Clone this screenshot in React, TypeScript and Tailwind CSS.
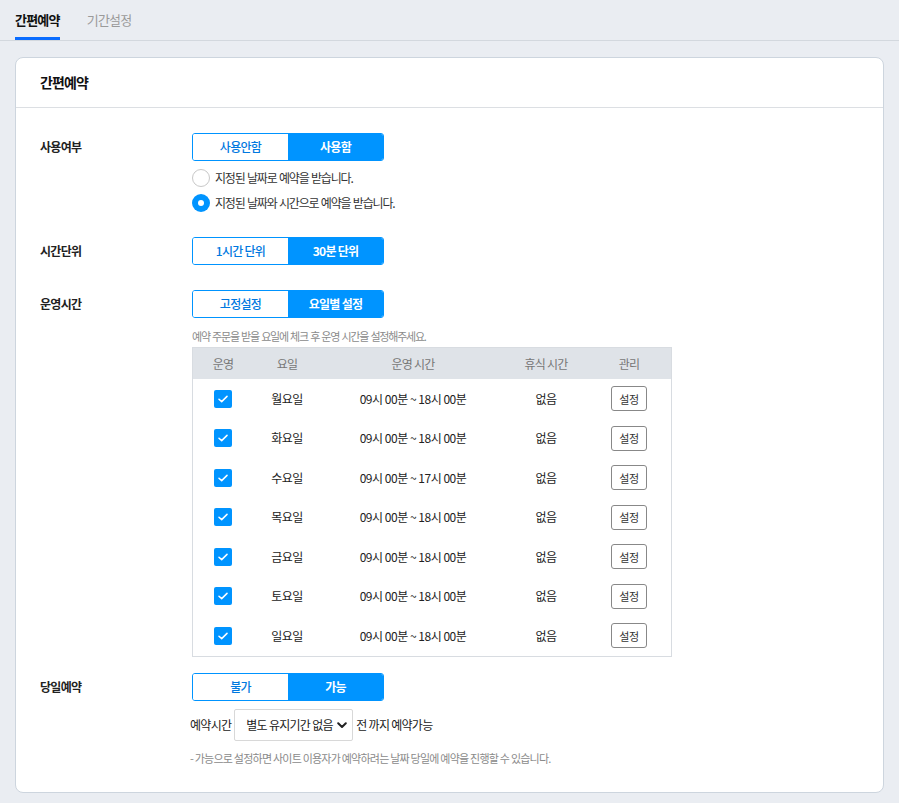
import React, { useState } from "react";

const FONT = {
  fontFamily: '"Noto Sans CJK KR", "Noto Sans", "Liberation Sans", sans-serif',
};

type Day = { name: string; time: string; rest: string; on: boolean };

const DAYS: Day[] = [
  { name: "월요일", time: "09시 00분 ~ 18시 00분", rest: "없음", on: true },
  { name: "화요일", time: "09시 00분 ~ 18시 00분", rest: "없음", on: true },
  { name: "수요일", time: "09시 00분 ~ 17시 00분", rest: "없음", on: true },
  { name: "목요일", time: "09시 00분 ~ 18시 00분", rest: "없음", on: true },
  { name: "금요일", time: "09시 00분 ~ 18시 00분", rest: "없음", on: true },
  { name: "토요일", time: "09시 00분 ~ 18시 00분", rest: "없음", on: true },
  { name: "일요일", time: "09시 00분 ~ 18시 00분", rest: "없음", on: true },
];

function Segment({
  options,
  value,
  onChange,
}: {
  options: string[];
  value: number;
  onChange: (i: number) => void;
}) {
  return (
    <div className="flex w-[192px] h-[28px] border border-[#0094ff] rounded-[3px] overflow-hidden">
      {options.map((opt, i) => (
        <button
          key={opt}
          onClick={() => onChange(i)}
          className={
            value === i
              ? "flex-1 bg-[#0094ff] text-white text-[12px] font-bold tracking-[-0.06em]"
              : "flex-1 bg-white text-[#0078e0] text-[12px] font-medium tracking-[-0.06em]"
          }
        >
          {opt}
        </button>
      ))}
    </div>
  );
}

function Radio({
  checked,
  label,
  onClick,
}: {
  checked: boolean;
  label: string;
  onClick: () => void;
}) {
  return (
    <label className="flex items-center gap-[5px] cursor-pointer" onClick={onClick}>
      {checked ? (
        <span className="w-[18px] h-[18px] rounded-full bg-[#0094ff] flex items-center justify-center">
          <span className="w-[6px] h-[6px] rounded-full bg-white" />
        </span>
      ) : (
        <span className="w-[18px] h-[18px] rounded-full border border-[#c8c8c8] bg-white" />
      )}
      <span className="text-[12px] text-[#333] tracking-[-0.1em] [word-spacing:1px]">{label}</span>
    </label>
  );
}

function Check({ checked }: { checked: boolean }) {
  return (
    <span
      className={
        checked
          ? "w-[18px] h-[18px] rounded-[2px] bg-[#0094ff] flex items-center justify-center"
          : "w-[18px] h-[18px] rounded-[2px] border border-[#c8c8c8] bg-white"
      }
    >
      {checked && (
        <svg width="10" height="8" viewBox="0 0 10 8" fill="none">
          <path d="M1 4.2L3.7 6.6L9 1.4" stroke="white" strokeWidth="1.5" strokeLinecap="round" strokeLinejoin="round" />
        </svg>
      )}
    </span>
  );
}

function Row({ label, children }: { label: string; children: React.ReactNode }) {
  return (
    <div className="flex">
      <div className="w-[152px] h-[28px] flex items-center text-[12px] font-bold text-[#222] tracking-[-0.06em]">
        {label}
      </div>
      <div className="flex-1">{children}</div>
    </div>
  );
}

export default function App() {
  const [tab, setTab] = useState(0);
  const [use, setUse] = useState(1);
  const [mode, setMode] = useState(1);
  const [unit, setUnit] = useState(1);
  const [hours, setHours] = useState(1);
  const [sameDay, setSameDay] = useState(1);

  return (
    <div className="min-h-[803px] bg-[#eaedf2] pb-[11px]" style={FONT}>
      {/* Tabs */}
      <div className="flex h-[41px] border-b border-[#d3d8de] px-[15px] gap-[27px]">
        {["간편예약", "기간설정"].map((t, i) => (
          <button
            key={t}
            onClick={() => setTab(i)}
            className={
              tab === i
                ? "h-full text-[13px] font-bold text-[#111] tracking-[-0.06em] border-b-[3px] border-[#0a6cff] pt-[3px]"
                : "h-full text-[13px] text-[#9a9a9a] tracking-[-0.06em] border-b-[3px] border-transparent pt-[3px]"
            }
          >
            {t}
          </button>
        ))}
      </div>

      {/* Card */}
      <div className="mx-[15px] mt-[16px] bg-white border border-[#cdd5de] rounded-[8px]">
        <div className="h-[50px] flex items-center px-[24px] border-b border-[#dcdfe3]">
          <h2 className="text-[14px] font-bold text-[#111] tracking-[-0.06em]">간편예약</h2>
        </div>

        <div className="pl-[24px] pr-[24px] pt-[25px] pb-[26px]">
          <Row label="사용여부">
            <Segment options={["사용안함", "사용함"]} value={use} onChange={setUse} />
            <div className="mt-[8px] flex flex-col gap-[7px]">
              <Radio
                checked={mode === 0}
                label="지정된 날짜로 예약을 받습니다."
                onClick={() => setMode(0)}
              />
              <Radio
                checked={mode === 1}
                label="지정된 날짜와 시간으로 예약을 받습니다."
                onClick={() => setMode(1)}
              />
            </div>
          </Row>

          <div className="mt-[25px]">
            <Row label="시간단위">
              <Segment options={["1시간 단위", "30분 단위"]} value={unit} onChange={setUnit} />
            </Row>
          </div>

          <div className="mt-[25px]">
            <Row label="운영시간">
              <Segment options={["고정설정", "요일별 설정"]} value={hours} onChange={setHours} />
              <p className="mt-[10px] text-[11px] text-[#8a8a8a] leading-[16px] tracking-[-0.11em] [word-spacing:1px]">
                예약 주문을 받을 요일에 체크 후 운영 시간을 설정해주세요.
              </p>
              <div className="mt-[3px] w-[480px] border border-[#d8dce1]">
                <div className="flex h-[31px] items-center bg-[#dfe3e8] text-[12px] text-[#777] tracking-[-0.06em]">
                  <div className="w-[60px] text-center">운영</div>
                  <div className="w-[68px] text-center">요일</div>
                  <div className="w-[184px] text-center">운영 시간</div>
                  <div className="w-[82px] text-center">휴식 시간</div>
                  <div className="flex-1 text-center">관리</div>
                </div>
                {DAYS.map((d) => (
                  <div
                    key={d.name}
                    className="flex h-[39.5px] items-center text-[12px] text-[#222] tracking-[-0.04em]"
                  >
                    <div className="w-[60px] flex justify-center">
                      <Check checked={d.on} />
                    </div>
                    <div className="w-[68px] text-center">{d.name}</div>
                    <div className="w-[184px] text-center">{d.time}</div>
                    <div className="w-[82px] text-center">{d.rest}</div>
                    <div className="flex-1 flex justify-center">
                      <button className="w-[36px] h-[25px] border border-[#888] rounded-[3px] text-[11px] text-[#333] bg-white">
                        설정
                      </button>
                    </div>
                  </div>
                ))}
              </div>
            </Row>
          </div>

          <div className="mt-[16px]">
            <Row label="당일예약">
              <Segment options={["불가", "가능"]} value={sameDay} onChange={setSameDay} />
              <div className="mt-[8px] -ml-[2px] flex items-center gap-[3px] text-[12px] text-[#222] tracking-[-0.06em]">
                <span>예약시간</span>
                <div className="relative">
                  <select className="appearance-none w-[119px] h-[32px] border border-[#d8d8d8] rounded-[2px] bg-white pl-[11px] text-[12px] text-[#222] tracking-[-0.06em] outline-none">
                    <option>별도 유지기간 없음</option>
                  </select>
                  <svg
                    className="absolute right-[6px] top-[13px] pointer-events-none"
                    width="10"
                    height="7"
                    viewBox="0 0 10 7"
                    fill="none"
                  >
                    <path d="M1.2 1.2L5 5L8.8 1.2" stroke="#222" strokeWidth="2" strokeLinecap="round" strokeLinejoin="round" />
                  </svg>
                </div>
                <span>전 까지 예약가능</span>
              </div>
              <p className="mt-[9px] -ml-[2px] text-[11px] text-[#8a8a8a] tracking-[-0.07em]">
                - 가능으로 설정하면 사이트 이용자가 예약하려는 날짜 당일에 예약을 진행할 수 있습니다.
              </p>
            </Row>
          </div>
        </div>
      </div>
    </div>
  );
}
